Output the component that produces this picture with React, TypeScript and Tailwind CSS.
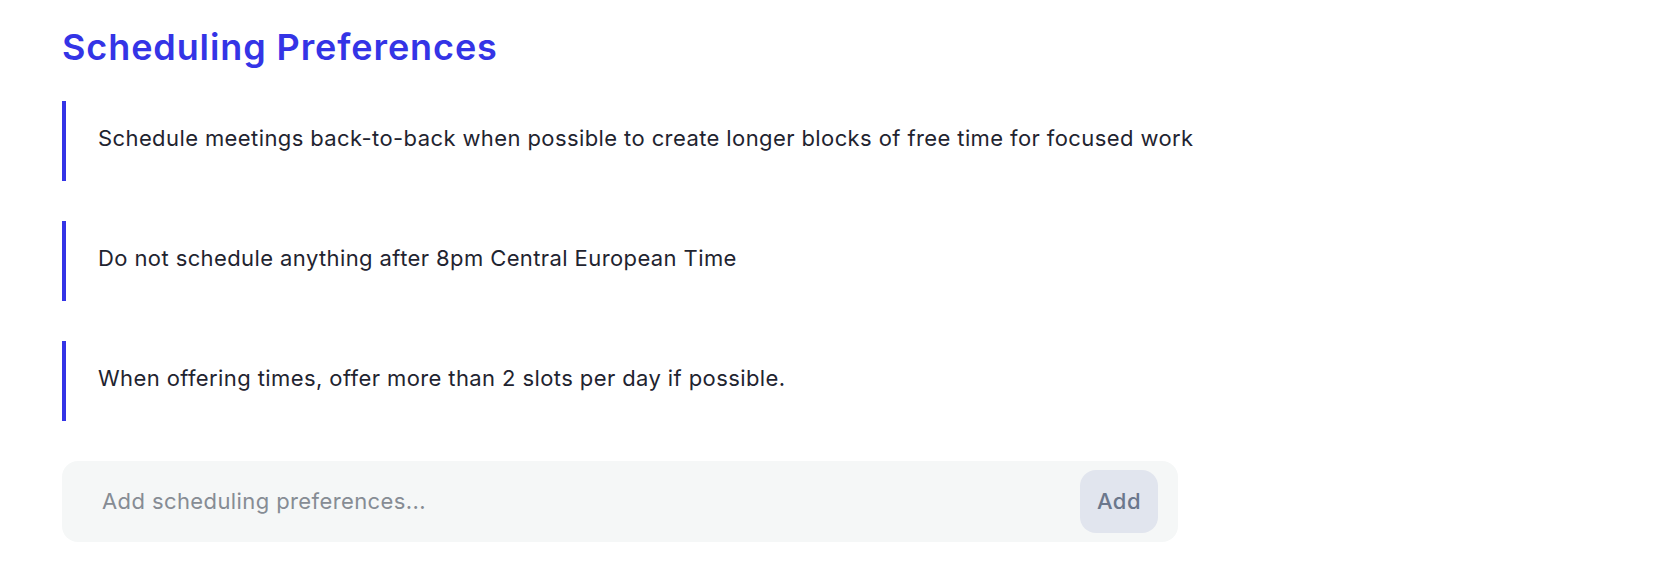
import { useState } from "react";

const INITIAL_PREFERENCES = [
  "Schedule meetings back-to-back when possible to create longer blocks of free time for focused work",
  "Do not schedule anything after 8pm Central European Time",
  "When offering times, offer more than 2 slots per day if possible.",
];

export default function App() {
  const [items, setItems] = useState(INITIAL_PREFERENCES);
  const [draft, setDraft] = useState("");

  const addItem = () => {
    const value = draft.trim();
    if (!value) return;
    setItems([...items, value]);
    setDraft("");
  };

  return (
    <div className="min-h-screen bg-white pl-[62px] pt-[27px] font-['Inter',system-ui,sans-serif]">
      <h1 className="mb-[34px] text-4xl font-semibold tracking-[0.9px] text-[#3434e6]">
        Scheduling Preferences
      </h1>

      <ul className="flex flex-col gap-10">
        {items.map((item) => (
          <li
            key={item}
            className="flex h-20 items-center border-l-4 border-[#3434e6] pb-[6px] pl-8 text-[22px] tracking-[0.4px] text-[#1f2430]"
          >
            {item}
          </li>
        ))}
      </ul>

      <div className="mt-10 flex h-[81px] w-[1116px] items-center rounded-2xl bg-[#f5f7f7] pl-10 pr-5">
        <input
          value={draft}
          onChange={(e) => setDraft(e.target.value)}
          placeholder="Add scheduling preferences..."
          className="flex-1 bg-transparent text-[22px] tracking-[0.4px] text-[#1f2430] outline-none placeholder:text-[#868c94]"
        />
        <button
          onClick={addItem}
          className="h-[63px] w-[78px] rounded-2xl bg-[#e1e5ee] text-[22px] font-medium tracking-[0.5px] text-[#6b778c]"
        >
          Add
        </button>
      </div>
    </div>
  );
}
